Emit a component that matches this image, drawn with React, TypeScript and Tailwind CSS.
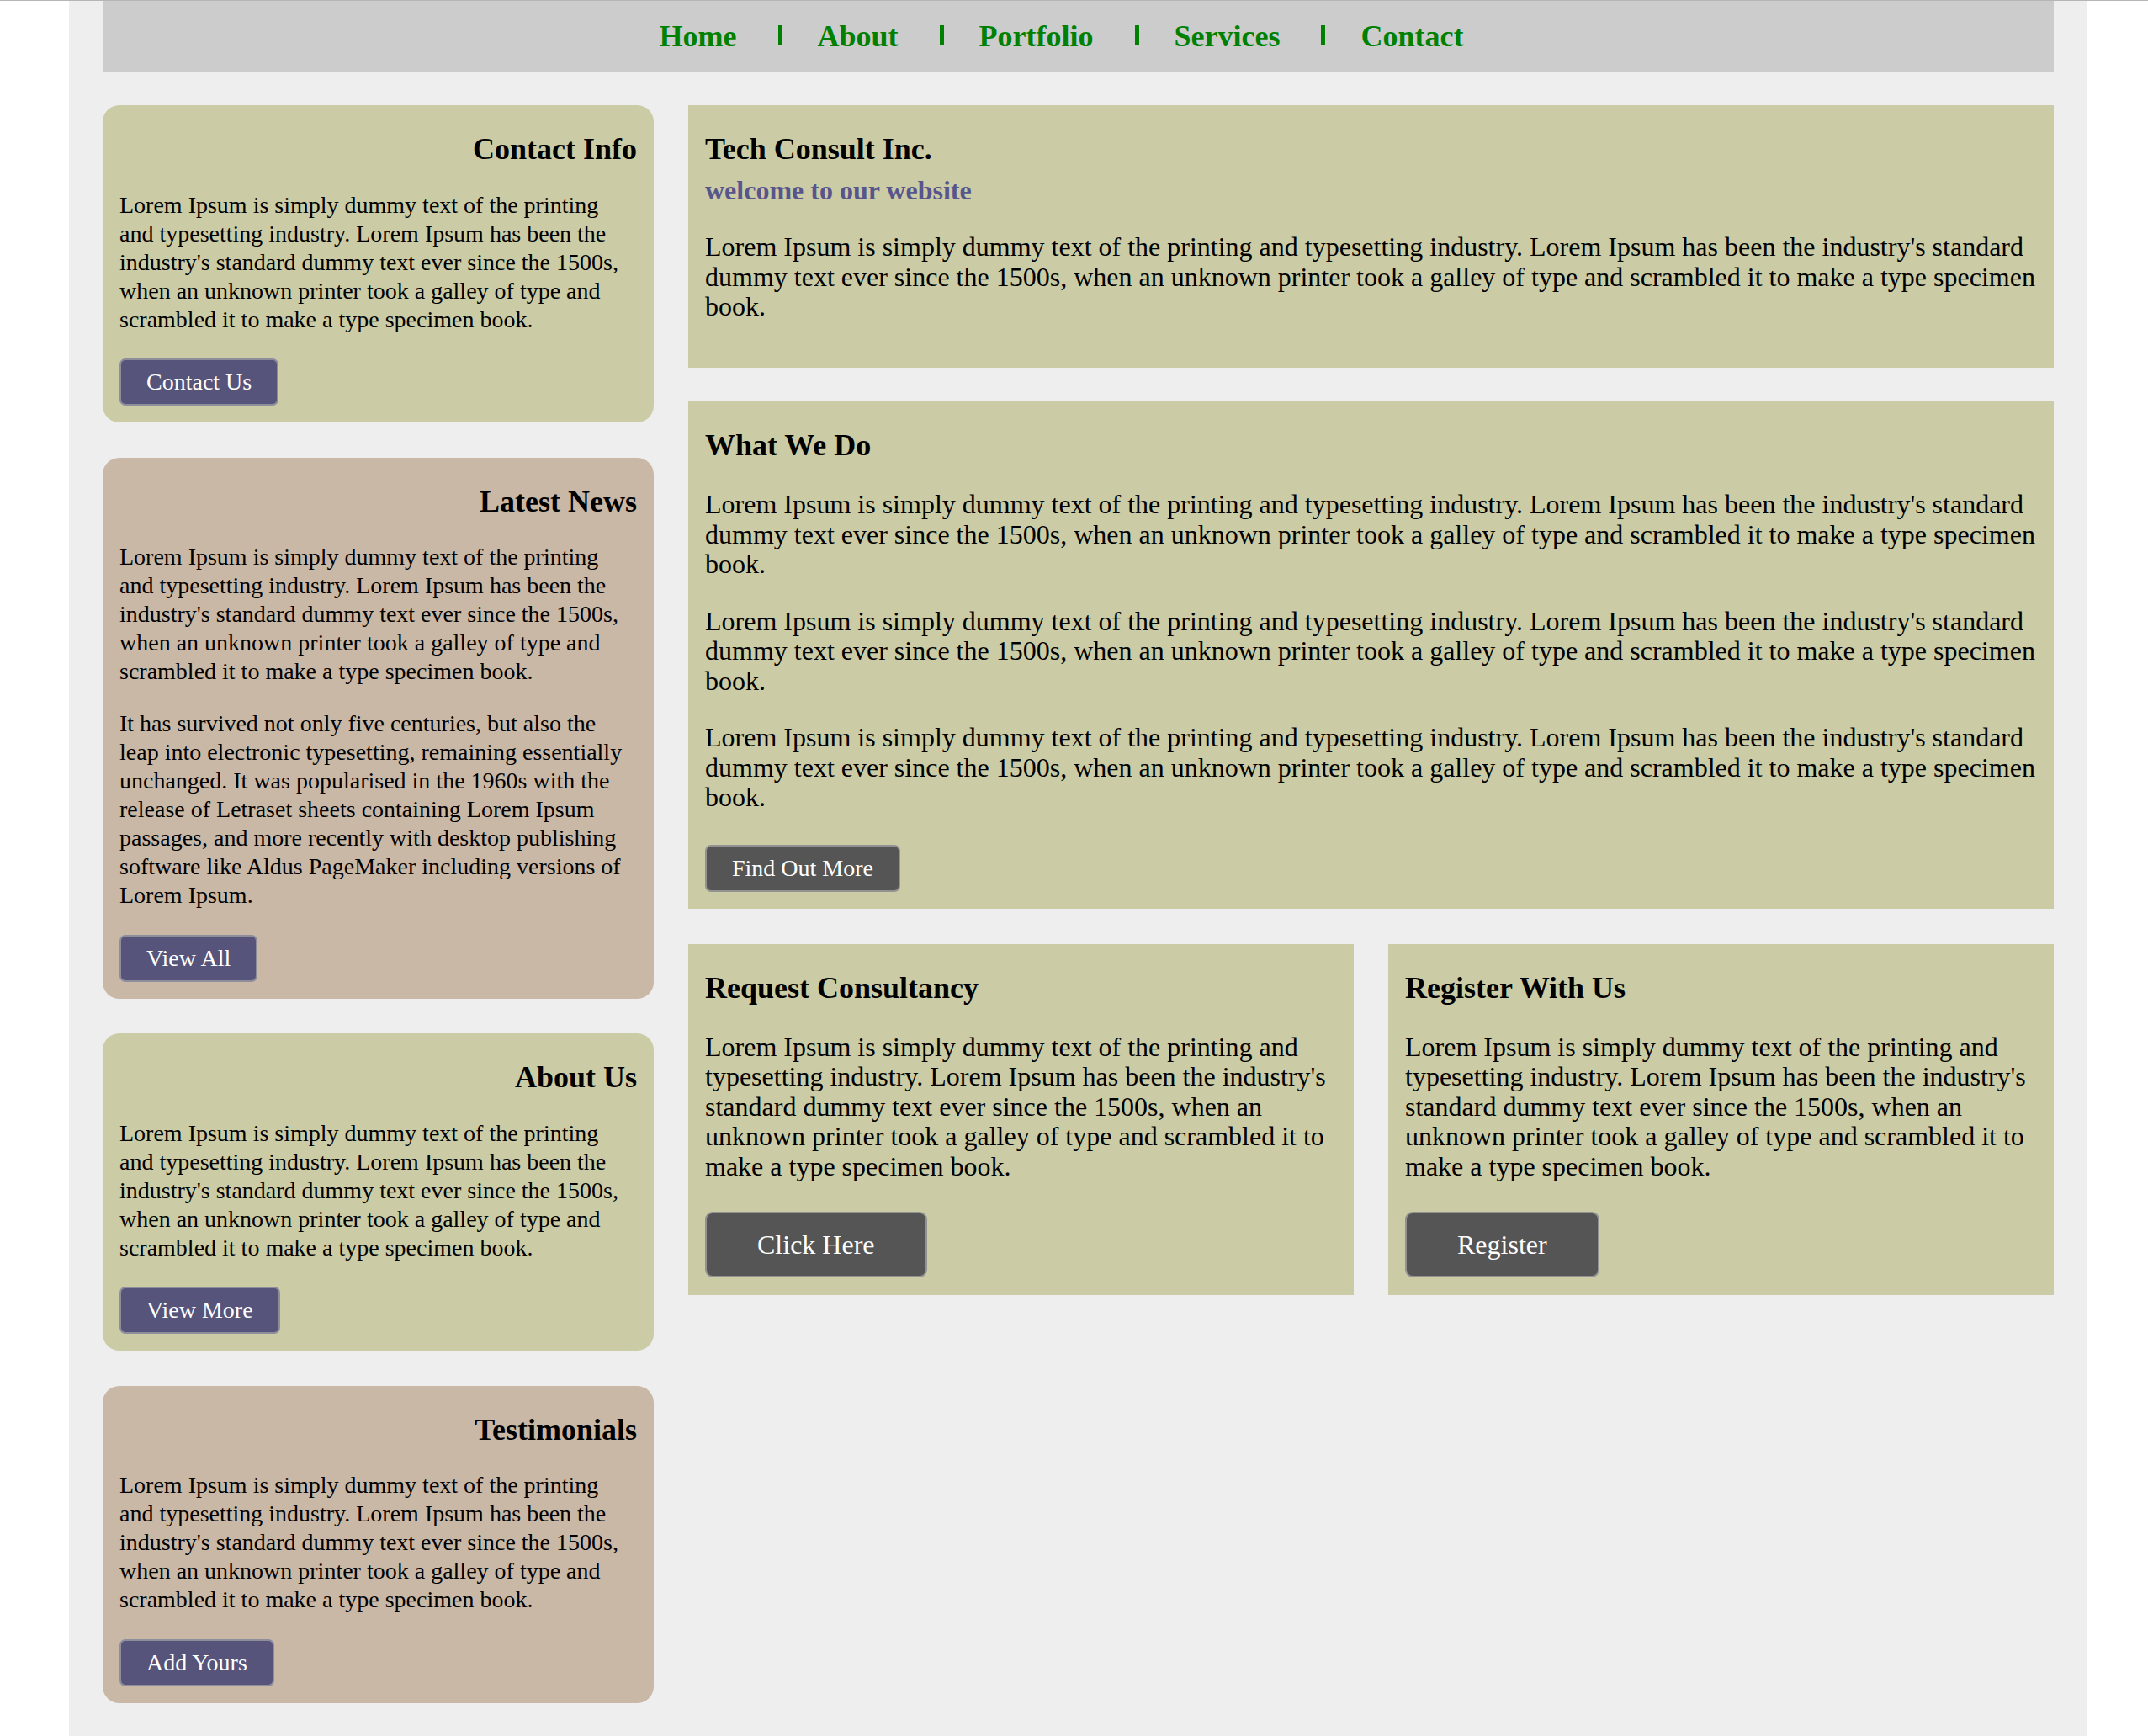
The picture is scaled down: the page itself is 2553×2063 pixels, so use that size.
const LOREM =
  "Lorem Ipsum is simply dummy text of the printing and typesetting industry. Lorem Ipsum has been the industry's standard dummy text ever since the 1500s, when an unknown printer took a galley of type and scrambled it to make a type specimen book.";

const SURVIVED =
  "It has survived not only five centuries, but also the leap into electronic typesetting, remaining essentially unchanged. It was popularised in the 1960s with the release of Letraset sheets containing Lorem Ipsum passages, and more recently with desktop publishing software like Aldus PageMaker including versions of Lorem Ipsum.";

const NAV = ["Home", "About", "Portfolio", "Services", "Contact"] as const;

const sideCards = [
  { title: "Contact Info", tone: "bg-[#cbcca6]", paras: [LOREM], cta: "Contact Us" },
  { title: "Latest News", tone: "bg-[#cab8a7]", paras: [LOREM, SURVIVED], cta: "View All" },
  { title: "About Us", tone: "bg-[#cbcca6]", paras: [LOREM], cta: "View More" },
  { title: "Testimonials", tone: "bg-[#cab8a7]", paras: [LOREM], cta: "Add Yours" },
] as const;

function SideCard({ title, tone, paras, cta }: { title: string; tone: string; paras: readonly string[]; cta: string }) {
  return (
    <section className={`rounded-[20px] px-[20px] pt-[32px] pb-[20px] ${tone}`}>
      <h3 className="text-right text-[36px] font-bold leading-[40px]">{title}</h3>
      {paras.map((p, i) => (
        <p key={i} className={`${i === 0 ? "mt-[29.5px]" : "mt-[28px]"} pr-[6px] text-[28px] leading-[34px]`}>
          {p}
        </p>
      ))}
      <button className="mt-[29.5px] block rounded-[7px] border-2 border-[#8e8d9c] bg-[#56547a] px-[30px] py-[10px] text-[28px] leading-[32px] text-white">
        {cta}
      </button>
    </section>
  );
}

function BigButton({ label }: { label: string }) {
  return (
    <button className="mt-[35.5px] block rounded-[9px] border-2 border-[#929292] bg-[#555555] px-[60px] py-[19px] text-[32px] leading-[36px] text-white">
      {label}
    </button>
  );
}

export default function App() {
  return (
    <div className="min-h-screen bg-white font-['Liberation_Serif','Times_New_Roman',serif] text-black">
      <div className="h-px w-full bg-[#b5b5b5]" />
      <div className="ml-[82px] w-[2399px] bg-[#eeeeee] px-[40px] pb-[41px]">
        {/* top nav */}
        <nav className="flex h-[84px] items-center justify-center bg-[#cccccc] pr-[40px] text-[36px] font-bold text-[#008000]">
          {NAV.map((item, i) => (
            <span key={item} className="flex items-center">
              {i > 0 && <span className="mb-[2px] ml-[49px] mr-[42px] inline-block h-[24px] w-[5px] bg-[#008000]" />}
              <a href="#">{item}</a>
            </span>
          ))}
        </nav>

        <div className="mt-[40px] grid grid-cols-[655px_1623px] items-start gap-x-[41px]">
          <aside className="flex flex-col gap-[41.5px]">
            {sideCards.map((c) => (
              <SideCard key={c.title} {...c} />
            ))}
          </aside>

          <main className="flex flex-col gap-[40px]">
            <section className="bg-[#cbcca6] pl-[20px] pr-[16px] pt-[32px] pb-[54.5px]">
              <h2 className="text-[36px] font-bold leading-[40px]">Tech Consult Inc.</h2>
              <h4 className="mt-[11px] text-[32px] font-bold leading-[36px] text-[#57558b]">welcome to our website</h4>
              <p className="mt-[32px] text-[32px] leading-[35.5px]">{LOREM}</p>
            </section>

            <section className="bg-[#cbcca6] pl-[20px] pr-[16px] pt-[32px] pb-[20px]">
              <h3 className="text-[36px] font-bold leading-[40px]">What We Do</h3>
              <p className="mt-[33px] text-[32px] leading-[35.5px]">{LOREM}</p>
              <p className="mt-[32px] text-[32px] leading-[35.5px]">{LOREM}</p>
              <p className="mt-[32px] text-[32px] leading-[35.5px]">{LOREM}</p>
              <button className="mt-[38.5px] block rounded-[7px] border-2 border-[#929292] bg-[#555555] px-[30px] py-[10px] text-[28px] leading-[32px] text-white">
                Find Out More
              </button>
            </section>

            <div className="mt-[1.5px] grid grid-cols-2 gap-x-[41px]">
              <section className="bg-[#cbcca6] pl-[20px] pr-[16px] pt-[32px] pb-[21px]">
                <h3 className="text-[36px] font-bold leading-[40px]">Request Consultancy</h3>
                <p className="mt-[33px] text-[32px] leading-[35.5px]">{LOREM}</p>
                <BigButton label="Click Here" />
              </section>
              <section className="bg-[#cbcca6] pl-[20px] pr-[16px] pt-[32px] pb-[21px]">
                <h3 className="text-[36px] font-bold leading-[40px]">Register With Us</h3>
                <p className="mt-[33px] text-[32px] leading-[35.5px]">{LOREM}</p>
                <BigButton label="Register" />
              </section>
            </div>
          </main>
        </div>
      </div>
    </div>
  );
}
